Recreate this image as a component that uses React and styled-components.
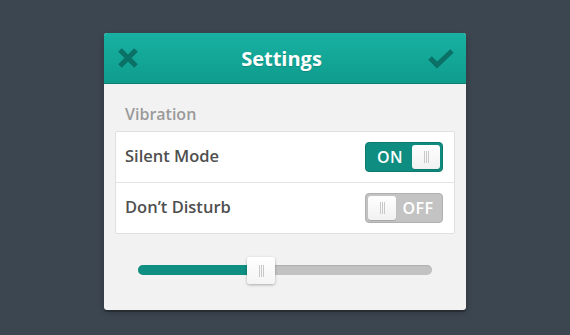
import React from "react";
import styled, { createGlobalStyle } from "styled-components";

const Global = createGlobalStyle`
  html, body { margin: 0; padding: 0; background: #3c4650; }
  body { font-family: "Open Sans", "Lato", sans-serif; -webkit-font-smoothing: antialiased; }
`;

const Page = styled.div`
  width: 570px;
  height: 335px;
  padding: 33px 0 0 104px;
  box-sizing: border-box;
`;

const Card = styled.div`
  width: 362px;
  background: #f2f2f2;
  border-radius: 3px;
  box-shadow: 0 2px 0 rgba(0,0,0,0.25), 0 3px 6px rgba(0,0,0,0.2);
  overflow: hidden;
`;

const Header = styled.div`
  height: 51px;
  display: flex;
  align-items: center;
  justify-content: space-between;
  padding: 0 12px 0 11px;
  background: linear-gradient(#18b1a2, #0f9c8d);
  border-bottom: 1px solid #0b7f73;
  box-sizing: border-box;
`;

const Title = styled.h1`
  margin: 0 6px 0 0;
  font-size: 20px;
  font-weight: 700;
  color: #fff;
  text-shadow: 0 1px 1px rgba(0,0,0,0.15);
`;

const IconButton = styled.span`
  width: 26px;
  height: 26px;
  display: flex;
  align-items: center;
  justify-content: center;
`;

const Body = styled.div`
  padding: 20px 11px 35px;
`;

const SectionLabel = styled.div`
  font-size: 16px;
  font-weight: 600;
  color: #9a9a9a;
  line-height: 20px;
  padding-left: 10px;
  margin-bottom: 7px;
`;

const List = styled.div`
  background: #fff;
  border: 1px solid #e0e0e0;
  border-radius: 2px;
`;

const Row = styled.div`
  height: 50px;
  display: flex;
  align-items: center;
  justify-content: space-between;
  padding: 0 11px 0 9px;
  box-sizing: border-box;
  & + & { border-top: 1px solid #e2e2e2; height: 51px; }
`;

const RowLabel = styled.span`
  font-size: 16.5px;
  font-weight: 600;
  color: #4f4f4f;
  padding-bottom: 4px;
`;

const Toggle = styled.div`
  width: 78px;
  height: 30px;
  box-sizing: border-box;
  border-radius: 4px;
  padding: 2px;
  display: flex;
  flex-direction: ${p => (p.$on ? "row" : "row-reverse")};
  align-items: stretch;
  background: ${p => (p.$on ? "#0f8d80" : "#c3c3c3")};
  border: 1px solid ${p => (p.$on ? "#0c7a6f" : "#b0b0b0")};
`;

const ToggleText = styled.span`
  flex: 1;
  display: flex;
  align-items: center;
  justify-content: center;
  font-size: 16px;
  font-weight: 600;
  color: #fff;
  letter-spacing: 0.5px;
`;

const Knob = styled.span`
  width: 28px;
  border-radius: 3px;
  background: linear-gradient(#ffffff, #f1f1f1);
  display: flex;
  align-items: center;
  justify-content: center;
  box-shadow: 0 1px 1px rgba(0,0,0,0.15);
`;

const Grip = styled.span`
  width: 5px;
  height: 12px;
  background: repeating-linear-gradient(90deg, #c8c8c8 0 1px, transparent 1px 2px);
`;

const SliderWrap = styled.div`
  padding: 31px 23px 0 23px;
`;

const Track = styled.div`
  position: relative;
  height: 10px;
  border-radius: 5px;
  background: #c2c2c2;
  box-shadow: inset 0 1px 1px rgba(0,0,0,0.1);
`;

const Fill = styled.div`
  height: 100%;
  border-radius: 5px 0 0 5px;
  background: #0e8f81;
`;

const Thumb = styled.div`
  position: absolute;
  top: -8px;
  width: 28px;
  height: 27px;
  margin-left: -14px;
  border-radius: 3px;
  background: linear-gradient(#ffffff, #f4f4f4);
  box-shadow: 0 1px 3px rgba(0,0,0,0.3);
  display: flex;
  align-items: center;
  justify-content: center;
`;

const CloseIcon = () => (
  <svg width="22" height="22" viewBox="0 0 22 22">
    <path d="M3 3 L19 19 M19 3 L3 19" stroke="#0b7066" strokeWidth="5" strokeLinecap="butt" />
  </svg>
);

const CheckIcon = () => (
  <svg width="26" height="22" viewBox="0 0 26 22">
    <path d="M2 11 L9 18 L24 4" stroke="#0b7066" strokeWidth="5" fill="none" strokeLinejoin="miter" />
  </svg>
);

const Switch = ({ on }) => (
  <Toggle $on={on}>
    <ToggleText>{on ? "ON" : "OFF"}</ToggleText>
    <Knob><Grip /></Knob>
  </Toggle>
);

export default function App() {
  const value = 42;
  return (
    <Page>
      <Global />
      <Card>
        <Header>
          <IconButton><CloseIcon /></IconButton>
          <Title>Settings</Title>
          <IconButton><CheckIcon /></IconButton>
        </Header>
        <Body>
          <SectionLabel>Vibration</SectionLabel>
          <List>
            <Row>
              <RowLabel>Silent Mode</RowLabel>
              <Switch on />
            </Row>
            <Row>
              <RowLabel>Don’t Disturb</RowLabel>
              <Switch on={false} />
            </Row>
          </List>
          <SliderWrap>
            <Track>
              <Fill style={{ width: `${value}%` }} />
              <Thumb style={{ left: `${value}%` }}><Grip /></Thumb>
            </Track>
          </SliderWrap>
        </Body>
      </Card>
    </Page>
  );
}
